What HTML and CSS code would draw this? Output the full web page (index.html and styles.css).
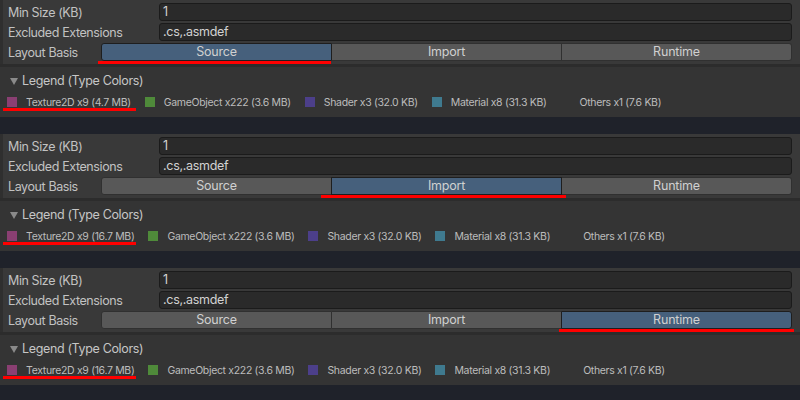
FILE: index.html
```html
<!DOCTYPE html>
<html>
<head>
<meta charset="utf-8">
<link rel="stylesheet" href="styles.css">
</head>
<body>
<div class="page">
  <div class="panel">
    <div class="settings">
      <div class="row"><span class="label">Min Size (KB)</span><div class="field">1</div></div>
      <div class="row"><span class="label">Excluded Extensions</span><div class="field">.cs,.asmdef</div></div>
      <div class="row"><span class="label short">Layout Basis</span>
        <div class="toolbar"><div class="btn active">Source</div><div class="btn">Import</div><div class="btn">Runtime</div></div>
      </div>
    </div>
    <div class="sep"></div>
    <div class="legend">
      <div class="legend-title"><span class="tri"></span>Legend (Type Colors)</div>
      <div class="items">
        <div class="item"><span class="sw tex"></span>Texture2D x9 (4.7 MB)</div>
        <div class="item"><span class="sw go"></span>GameObject x222 (3.6 MB)</div>
        <div class="item"><span class="sw sh"></span>Shader x3 (32.0 KB)</div>
        <div class="item"><span class="sw mat"></span>Material x8 (31.3 KB)</div>
        <div class="item"><span class="sw oth"></span>Others x1 (7.6 KB)</div>
      </div>
    </div>
    <div class="mark mark-source"></div>
    <div class="mark mark-tex"></div>
  </div>
  <div class="panel">
    <div class="settings">
      <div class="row"><span class="label">Min Size (KB)</span><div class="field">1</div></div>
      <div class="row"><span class="label">Excluded Extensions</span><div class="field">.cs,.asmdef</div></div>
      <div class="row"><span class="label short">Layout Basis</span>
        <div class="toolbar"><div class="btn">Source</div><div class="btn active">Import</div><div class="btn">Runtime</div></div>
      </div>
    </div>
    <div class="sep"></div>
    <div class="legend">
      <div class="legend-title"><span class="tri"></span>Legend (Type Colors)</div>
      <div class="items">
        <div class="item"><span class="sw tex"></span>Texture2D x9 (16.7 MB)</div>
        <div class="item"><span class="sw go"></span>GameObject x222 (3.6 MB)</div>
        <div class="item"><span class="sw sh"></span>Shader x3 (32.0 KB)</div>
        <div class="item"><span class="sw mat"></span>Material x8 (31.3 KB)</div>
        <div class="item"><span class="sw oth"></span>Others x1 (7.6 KB)</div>
      </div>
    </div>
    <div class="mark mark-import"></div>
    <div class="mark mark-tex"></div>
  </div>
  <div class="panel">
    <div class="settings">
      <div class="row"><span class="label">Min Size (KB)</span><div class="field">1</div></div>
      <div class="row"><span class="label">Excluded Extensions</span><div class="field">.cs,.asmdef</div></div>
      <div class="row"><span class="label short">Layout Basis</span>
        <div class="toolbar"><div class="btn">Source</div><div class="btn">Import</div><div class="btn active">Runtime</div></div>
      </div>
    </div>
    <div class="sep"></div>
    <div class="legend">
      <div class="legend-title"><span class="tri"></span>Legend (Type Colors)</div>
      <div class="items">
        <div class="item"><span class="sw tex"></span>Texture2D x9 (16.7 MB)</div>
        <div class="item"><span class="sw go"></span>GameObject x222 (3.6 MB)</div>
        <div class="item"><span class="sw sh"></span>Shader x3 (32.0 KB)</div>
        <div class="item"><span class="sw mat"></span>Material x8 (31.3 KB)</div>
        <div class="item"><span class="sw oth"></span>Others x1 (7.6 KB)</div>
      </div>
    </div>
    <div class="mark mark-runtime"></div>
    <div class="mark mark-tex"></div>
  </div>
</div>
</body>
</html>
```
FILE: styles.css
```css
html, body {
  margin: 0;
  padding: 0;
  background: #1f222a;
  width: 800px;
  height: 400px;
  overflow: hidden;
  font-family: Inter, "Liberation Sans", sans-serif;
}
.page {
  display: flex;
  flex-direction: column;
  gap: 17px;
}
.panel {
  position: relative;
  height: 117px;
  display: flex;
  flex-direction: column;
}
.settings {
  background: #393939;
  border-left: 3px solid #2f2f2f;
  padding: 3px 8px 3px 5px;
  display: flex;
  flex-direction: column;
  gap: 2px;
}
.row {
  display: flex;
  align-items: center;
  height: 18px;
}
.label {
  width: 151px;
  flex: none;
  color: #c2c2c2;
  font-size: 12.5px;
  letter-spacing: -0.4px;
}
.label.short {
  width: 93px;
}
.field {
  flex: 1;
  height: 18px;
  box-sizing: border-box;
  background: #2a2a2a;
  border: 1px solid #1b1b1b;
  border-radius: 3px;
  padding-left: 3px;
  color: #d2d2d2;
  font-size: 12.5px;
  letter-spacing: -0.3px;
  line-height: 16px;
}
.toolbar {
  flex: 1;
  display: flex;
  height: 18px;
}
.btn {
  flex: 1;
  box-sizing: border-box;
  height: 18px;
  background: #585858;
  border: 1px solid #303030;
  border-left: none;
  color: #d0d0d0;
  font-size: 12.5px;
  letter-spacing: -0.2px;
  line-height: 16px;
  text-align: center;
}
.btn:first-child {
  border-left: 1px solid #303030;
  border-radius: 3px 0 0 3px;
}
.btn:last-child {
  border-radius: 0 3px 3px 0;
}
.btn.active {
  background: #46607c;
  border-color: #1e1e1e;
}
.btn.active:not(:first-child) {
  border-left: 1px solid #1e1e1e;
  margin-left: -1px;
}
.sep {
  height: 3px;
  background: #2c2c2c;
}
.legend {
  flex: 1;
  background: #343434;
  padding: 6px 0 0 7px;
}
.legend-title {
  display: flex;
  align-items: center;
  height: 15px;
  color: #c6c6c6;
  font-size: 12.5px;
  letter-spacing: -0.35px;
}
.tri {
  width: 0;
  height: 0;
  border-left: 4px solid transparent;
  border-right: 4px solid transparent;
  border-top: 7px solid #8a8a8a;
  margin: 1px 4px 0 3px;
}
.items {
  display: flex;
  align-items: center;
  gap: 14px;
  margin-top: 6px;
  height: 16px;
}
.item {
  display: flex;
  align-items: center;
  gap: 9px;
  color: #bcbcbc;
  font-size: 10.5px;
  letter-spacing: -0.33px;
  white-space: nowrap;
}
.sw {
  width: 10px;
  height: 10px;
  flex: none;
}
.sw.tex { background: #8a3f72; }
.sw.go { background: #4f8a3a; }
.sw.sh { background: #4c3f8a; }
.sw.mat { background: #3f7a8f; }
.sw.oth { background: transparent; }
.mark {
  position: absolute;
  height: 3px;
  background: #ff0000;
}
.mark-source { left: 98px; width: 233px; top: 61px; }
.mark-import { left: 321px; width: 245px; top: 61px; }
.mark-runtime { left: 559px; width: 235px; top: 61px; }
.mark-tex { left: 3px; width: 133px; top: 108px; }
```
